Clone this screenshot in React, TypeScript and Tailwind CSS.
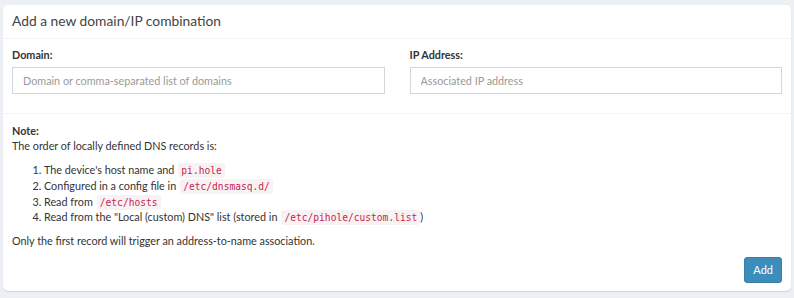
import React from 'react';

const Code = ({ children }: { children: React.ReactNode }) => (
  <code className="ml-[4px] rounded-[3px] bg-[#f9f2f4] px-[3px] py-[2px] font-['DejaVu_Sans_Mono',monospace] text-[9.6px] leading-none text-[#c7254e]">
    {children}
  </code>
);

const App = () => {
  return (
    <div className="h-[298px] bg-[#ecf0f5] px-[3px] pt-[5px] font-['Lato',sans-serif] text-[10.8px] leading-[15.7px] text-[#333]">
      <div className="w-[788px] rounded-[5px] bg-white shadow-[0_1px_1px_rgba(0,0,0,0.12)]">
        {/* Header */}
        <div className="border-b border-[#f4f4f4] px-[9px] pt-[7px] pb-[9px]">
          <h3 className="text-[13.8px] leading-[17px] text-[#444]">Add a new domain/IP combination</h3>
        </div>

        {/* Form fields */}
        <div className="grid grid-cols-2 gap-[25px] px-[9px] pt-[8px] pb-[19px]">
          <div>
            <label className="mb-[4px] block font-bold">Domain:</label>
            <input
              type="text"
              placeholder="Domain or comma-separated list of domains"
              className="block h-[27px] w-full border border-[#d2d6de] px-[10px] text-[10.8px] text-[#555] placeholder:text-[#999] outline-none"
            />
          </div>
          <div>
            <label className="mb-[4px] block font-bold">IP Address:</label>
            <input
              type="text"
              placeholder="Associated IP address"
              className="block h-[27px] w-full border border-[#d2d6de] px-[10px] text-[10.8px] text-[#555] placeholder:text-[#999] outline-none"
            />
          </div>
        </div>

        {/* Footer */}
        <div className="border-t border-[#f4f4f4] px-[9px] pt-[9px] pb-[8px]">
          <p className="font-bold">Note:</p>
          <p>The order of locally defined DNS records is:</p>
          <ol className="my-[8px] list-decimal pl-[32px]">
            <li>
              The device's host name and<Code>pi.hole</Code>
            </li>
            <li>
              Configured in a config file in<Code>/etc/dnsmasq.d/</Code>
            </li>
            <li>
              Read from<Code>/etc/hosts</Code>
            </li>
            <li>
              Read from the "Local (custom) DNS" list (stored in<Code>/etc/pihole/custom.list</Code>)
            </li>
          </ol>
          <p className="mb-[8px]">Only the first record will trigger an address-to-name association.</p>
          <div className="flex justify-end">
            <button className="h-[26px] rounded-[3px] border border-[#367fa9] bg-[#3c8dbc] px-[8px] text-[11px] text-white">
              Add
            </button>
          </div>
        </div>
      </div>
    </div>
  );
};

export default App;
